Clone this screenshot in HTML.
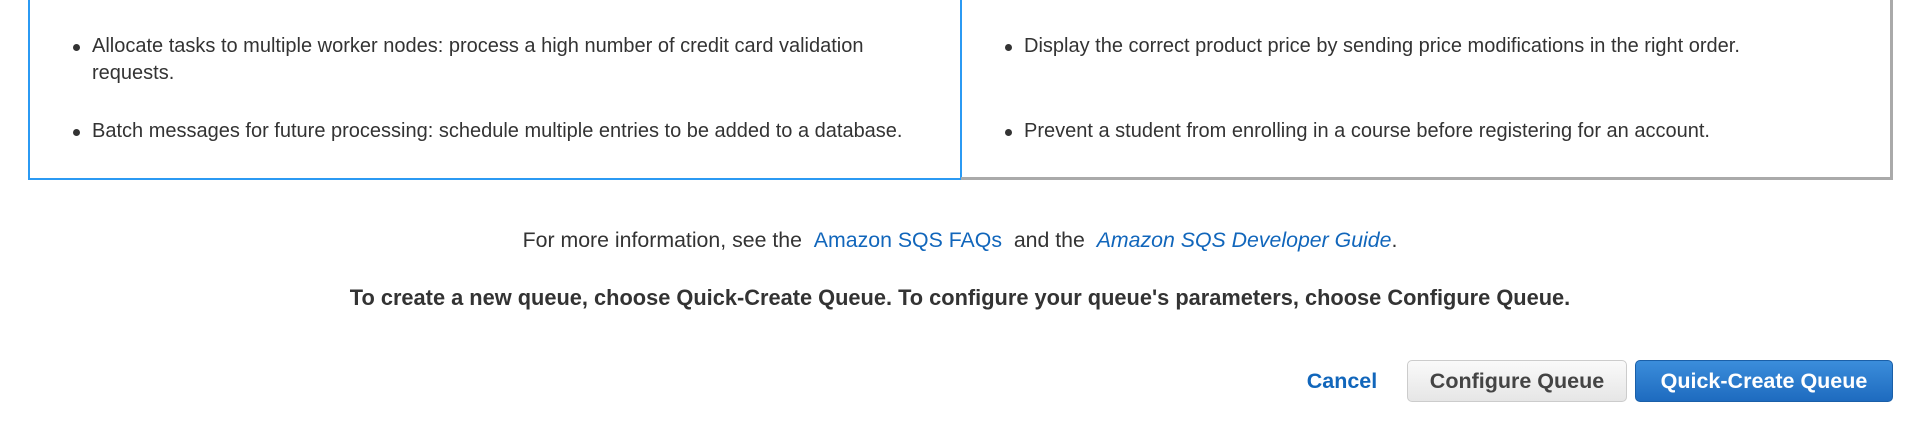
<!DOCTYPE html>
<html><head><meta charset="utf-8"><style>
*{margin:0;padding:0;box-sizing:border-box}
body{width:1920px;height:432px;background:#fff;font-family:"Liberation Sans",Arial,sans-serif;color:#444;position:relative;overflow:hidden}
.box{position:absolute;top:-10px;height:190px}
.l{left:28px;width:934px;border:2px solid #2b9af3;border-top:none}
.r{left:961px;width:932px;border-right:3px solid #aaa;border-bottom:3px solid #aaa}
.li{position:absolute;font-size:20px;line-height:27px;color:#333}
.li:before{content:"";position:absolute;left:-19px;top:11px;width:7px;height:7px;border-radius:50%;background:#333}
.t{position:absolute;left:0;width:1920px;text-align:center;font-size:21.3px;color:#333}
a{color:#1166bb;text-decoration:none}
.btn{position:absolute;top:360px;height:42px;border-radius:5px;font-weight:bold;font-size:21.5px;text-align:center;line-height:40px}
</style></head><body>
<div class="box l"></div><div class="box r"></div>
<div class="li" style="left:92px;top:33px;width:820px">Allocate tasks to multiple worker nodes: process a high number of credit card validation requests.</div>
<div class="li" style="left:92px;top:118px">Batch messages for future processing: schedule multiple entries to be added to a database.</div>
<div class="li" style="left:1024px;top:33px">Display the correct product price by sending price modifications in the right order.</div>
<div class="li" style="left:1024px;top:118px">Prevent a student from enrolling in a course before registering for an account.</div>
<div class="t" style="top:228px">For more information, see the &nbsp;<a>Amazon SQS FAQs</a>&nbsp; and the &nbsp;<a><i>Amazon SQS Developer Guide</i></a>.</div>
<div class="t" style="top:285px;font-weight:bold;font-size:21.8px">To create a new queue, choose Quick-Create Queue. To configure your queue's parameters, choose Configure Queue.</div>
<div class="btn" style="left:1295px;width:94px;color:#1166bb;line-height:42px">Cancel</div>
<div class="btn" style="left:1407px;width:220px;background:linear-gradient(#fafafa,#e6e6e6);border:1px solid #ccc;color:#444">Configure Queue</div>
<div class="btn" style="left:1635px;width:258px;background:linear-gradient(#3b8ddb,#1e6bbf);border:1px solid #1a5fa8;color:#fff">Quick-Create Queue</div>
</body></html>
